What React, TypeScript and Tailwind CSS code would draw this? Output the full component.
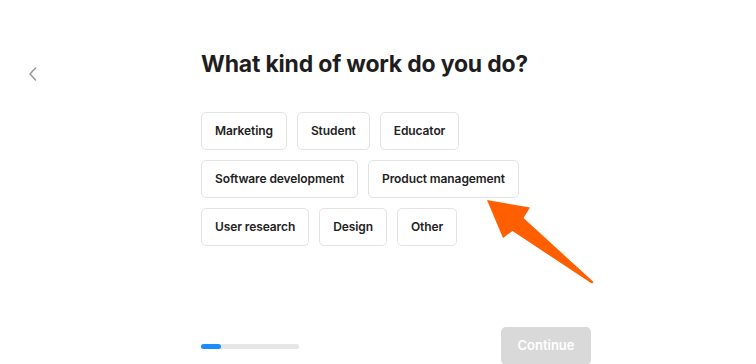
const rows = [
  ['Marketing', 'Student', 'Educator'],
  ['Software development', 'Product management'],
  ['User research', 'Design', 'Other'],
];

export default function App() {
  return (
    <div className="relative flex h-[364px] w-[756px] overflow-hidden bg-white font-['Inter',sans-serif] text-[#1e1e1e]">
      {/* back */}
      <div className="w-[201px] pl-[27px] pt-[66px]">
        <svg width="12" height="16" viewBox="0 0 12 16" fill="none">
          <path d="M8.5 2 L3 8 L8.5 14" stroke="#9a9a9a" strokeWidth="1.6" strokeLinecap="round" strokeLinejoin="round" />
        </svg>
      </div>

      <div className="flex w-[390px] flex-col pt-[48px]">
        <h1 className="text-[23px] font-bold leading-[32px] tracking-[-0.2px]">What kind of work do you do?</h1>

        <div className="mt-[32px] flex flex-col gap-[10px]">
          {rows.map((row, i) => (
            <div key={i} className="flex gap-[10px]">
              {row.map((label) => (
                <button
                  key={label}
                  className="h-[38px] rounded-[5px] border border-[#e3e3e3] bg-white px-[13px] text-[12px] font-semibold tracking-[-0.1px] text-[#222]"
                >
                  {label}
                </button>
              ))}
            </div>
          ))}
        </div>

        <div className="mt-[81px] flex items-center justify-between">
          <div className="h-[5px] w-[98px] rounded-full bg-[#e6e6e6]">
            <div className="h-full w-[20px] rounded-full bg-[#1a8cff]" />
          </div>
          <button className="h-[38px] w-[90px] rounded-[5px] bg-[#d9d9d9] text-[13px] font-semibold text-white">
            Continue
          </button>
        </div>
      </div>

      {/* annotation arrow */}
      <svg className="pointer-events-none absolute left-[480px] top-[190px]" width="120" height="100" viewBox="480 190 120 100">
        <path
          d="M487 200 L530 207.5 L523.5 218 L593 281.5 Q594 284 591 283 L512.5 231 L503 238 Z"
          fill="#ff5f00"
          strokeLinejoin="round"
        />
      </svg>
    </div>
  );
}
